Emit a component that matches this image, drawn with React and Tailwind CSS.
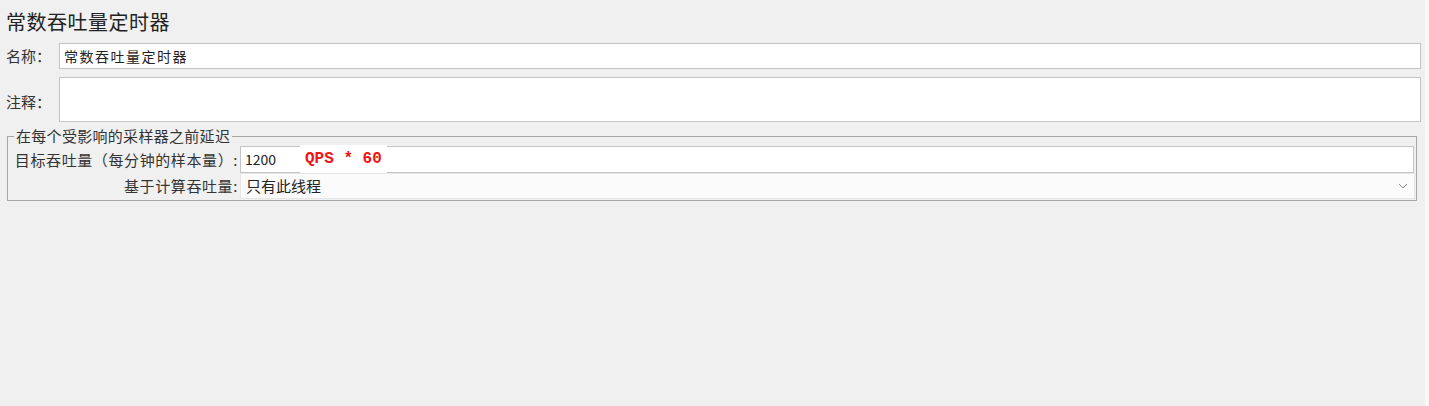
export default function App() {
  const font = { fontFamily: '"Noto Sans CJK SC", "Noto Sans", sans-serif' };
  return (
    <div className="flex w-[1429px] h-[406px] bg-[#f0f0f0] text-[#333333]" style={font}>
      <div className="flex flex-col w-[1425px] h-full">
        <div className="pt-[8px] pl-[6px] h-[36px] text-[20px] leading-[28px] tracking-[0.5px] text-[#222222]">常数吞吐量定时器</div>
        <div className="flex items-center mt-[7px] h-[26px]">
          <div className="w-[59px] pl-[6px] text-[15px] leading-[20px]">名称：</div>
          <div className="flex items-center flex-1 mr-[4px] h-full bg-white border border-[#c4c4c4] pl-[4px] text-[14px] tracking-[1.5px] text-[#222222]">常数吞吐量定时器</div>
        </div>
        <div className="flex items-center mt-[8px] h-[45px]">
          <div className="w-[59px] pl-[6px] text-[15px] leading-[20px] pt-[4px]">注释：</div>
          <div className="flex-1 mr-[4px] h-full bg-white border border-[#c4c4c4]"></div>
        </div>
        <fieldset className="mt-[5px] ml-[7px] w-[1410px] border border-[#a8a8a8] pb-[1px] pr-[1px]">
          <legend className="ml-[6px] px-[2px] text-[15px] leading-[18px] tracking-[0.3px]">在每个受影响的采样器之前延迟</legend>
          <div className="flex items-center mt-[1px] h-[27px]">
            <div className="w-[232px] pr-[2px] text-right text-[15px] leading-[20px] tracking-[0.6px]">目标吞吐量（每分钟的样本量）:</div>
            <div className="relative flex items-center flex-1 mr-[1px] h-full bg-white border border-[#c4c4c4] pl-[4px] text-[14px] text-[#222222]">
              1200
              <div className="absolute left-[59px] top-[-2px] w-[87px] h-[28px] bg-white flex items-center pl-[5px] text-[16px] font-bold text-[#f01414]" style={{ fontFamily: '"Liberation Mono", "DejaVu Sans Mono", monospace' }}>QPS * 60</div>
            </div>
          </div>
          <div className="flex items-center h-[26px]">
            <div className="w-[232px] pr-[2px] text-right text-[15px] leading-[20px] tracking-[0.6px]">基于计算吞吐量:</div>
            <div className="flex items-center flex-1 h-full bg-[#fbfbfb] border border-[#e6e6e6] pl-[5px] text-[15px] text-[#222222]">
              <span className="flex-1">只有此线程</span>
              <svg width="10" height="6" viewBox="0 0 10 6" className="mr-[6px]">
                <path d="M1 1 L5 5 L9 1" fill="none" stroke="#8a8a8a" strokeWidth="1" />
              </svg>
            </div>
          </div>
        </fieldset>
      </div>
      <div className="w-[4px] h-full bg-[#f9f9f9]"></div>
    </div>
  );
}
